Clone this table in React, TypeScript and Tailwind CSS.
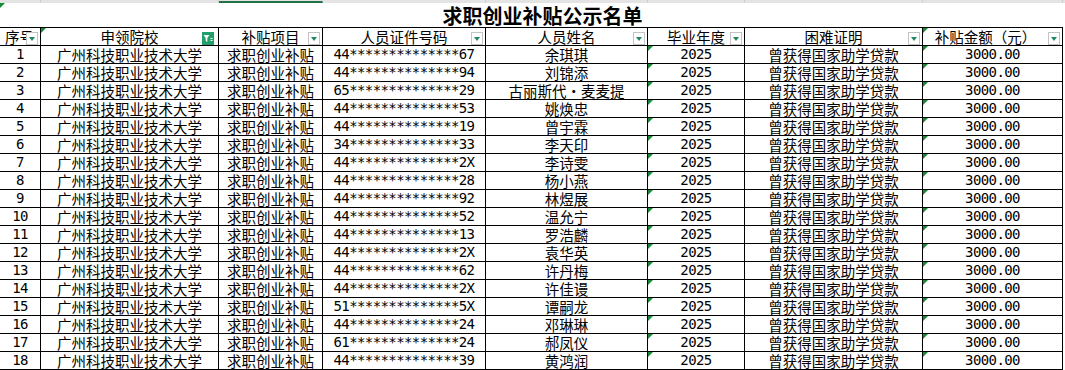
import React from "react";

const COLS = [41, 178, 104, 163, 162, 97, 178, 140];

const rows: [string, string, string][] = [
  ["44", "67", "余琪琪"],
  ["44", "94", "刘锦添"],
  ["65", "29", "古丽斯代·麦麦提"],
  ["44", "53", "姚焕忠"],
  ["44", "19", "曾宇霖"],
  ["34", "33", "李天印"],
  ["44", "2X", "李诗雯"],
  ["44", "28", "杨小燕"],
  ["44", "92", "林煜展"],
  ["44", "52", "温允宁"],
  ["44", "13", "罗浩麟"],
  ["44", "2X", "袁华英"],
  ["44", "62", "许丹梅"],
  ["44", "2X", "许佳谩"],
  ["51", "5X", "谭嗣龙"],
  ["44", "24", "邓琳琳"],
  ["61", "24", "郝凤仪"],
  ["44", "39", "黄鸿润"],
];

const cjk = "font-['Noto_Sans_CJK_SC',sans-serif] text-[14.5px] leading-[17px]";
const mono = "font-['DejaVu_Sans_Mono','Liberation_Mono',monospace] text-[14px] tracking-[-0.6px] leading-[17px]";

function Tri() {
  return (
    <span className="absolute left-0 top-0 w-0 h-0 border-t-[5px] border-r-[5px] border-t-[#178a37] border-r-transparent" />
  );
}

function Drop() {
  return (
    <span className="absolute right-[2px] bottom-0 w-[12px] h-[13px] bg-white border border-[#c4c4c4] flex items-center justify-center">
      <span className="w-0 h-0 border-l-[3.5px] border-r-[3.5px] border-t-[4px] border-l-transparent border-r-transparent border-t-[#1e8a5e]" />
    </span>
  );
}

function FilterOn() {
  return (
    <span className="absolute right-[4px] bottom-0 w-[12px] h-[13px] bg-[#22a06b] flex items-center justify-center">
      <svg width="12" height="13" viewBox="0 0 12 13">
        <path d="M1.5 3 H7.5 L5.3 6 V10 L3.7 9 V6 Z" fill="white" />
        <rect x="8.5" y="6" width="2" height="1" fill="white" />
        <rect x="8.5" y="8" width="2" height="1" fill="white" />
      </svg>
    </span>
  );
}

function Cell({
  w,
  children,
  className = "",
  header = false,
}: {
  w: number;
  children?: React.ReactNode;
  className?: string;
  header?: boolean;
}) {
  return (
    <div
      className={`relative box-border border-r border-b border-black flex items-center justify-center whitespace-nowrap text-black ${
        header ? "h-[19px] border-t" : "h-[18px]"
      } ${className}`}
      style={{ width: w }}
    >
      {children}
    </div>
  );
}

export default function App() {
  return (
    <div className="w-[1065px] h-[370px] bg-white overflow-hidden">
      {/* top strip (sheet header edge) */}
      <div className="flex h-[3px] bg-[#e4e4e4]">
        {COLS.map((w, i) => (
          <div
            key={i}
            className={`box-border border-r border-[#cfcfcf] ${i === 2 ? "bg-[#e4e4e4] border-b-2 border-b-[#217346]" : ""}`}
            style={{ width: w }}
          />
        ))}
      </div>
      {/* title */}
      <div className="relative h-[24px] w-[1063px] flex items-center justify-center pl-[22px] pt-[2px]">
        <span className="absolute left-0 top-0 w-0 h-0 border-t-[5px] border-r-[5px] border-t-[#178a37] border-r-transparent" />
        <span className="font-['Noto_Sans_CJK_SC',serif] font-bold text-[20px] leading-[22px] text-black">
          求职创业补贴公示名单
        </span>
      </div>
      {/* header */}
      <div className="flex">
        <Cell w={COLS[0]} header className={cjk + " justify-start pl-[5px]"}>
          序号
          <Drop />
        </Cell>
        <Cell w={COLS[1]} header className={cjk}>
          <Tri />
          申领院校
          <FilterOn />
        </Cell>
        <Cell w={COLS[2]} header className={cjk}>
          补贴项目
          <Drop />
        </Cell>
        <Cell w={COLS[3]} header className={cjk}>
          人员证件号码
          <Drop />
        </Cell>
        <Cell w={COLS[4]} header className={cjk}>
          人员姓名
          <Drop />
        </Cell>
        <Cell w={COLS[5]} header className={cjk}>
          毕业年度
          <Drop />
        </Cell>
        <Cell w={COLS[6]} header className={cjk}>
          困难证明
          <Drop />
        </Cell>
        <Cell w={COLS[7]} header className={cjk + " pr-[14px]"}>
          <Tri />
          补贴金额（元）
          <Drop />
        </Cell>
      </div>
      {rows.map(([pre, suf, name], i) => (
        <div key={i} className="flex">
          <Cell w={COLS[0]} className={mono}>
            {i + 1}
          </Cell>
          <Cell w={COLS[1]} className={cjk}>
            广州科技职业技术大学
          </Cell>
          <Cell w={COLS[2]} className={cjk}>
            求职创业补贴
          </Cell>
          <Cell w={COLS[3]} className={mono}>
            {pre + "**************" + suf}
          </Cell>
          <Cell w={COLS[4]} className={cjk}>
            {name}
          </Cell>
          <Cell w={COLS[5]} className={mono}>
            <Tri />
            2025
          </Cell>
          <Cell w={COLS[6]} className={cjk}>
            曾获得国家助学贷款
          </Cell>
          <Cell w={COLS[7]} className={mono}>
            <Tri />
            3000.00
          </Cell>
        </div>
      ))}
    </div>
  );
}
